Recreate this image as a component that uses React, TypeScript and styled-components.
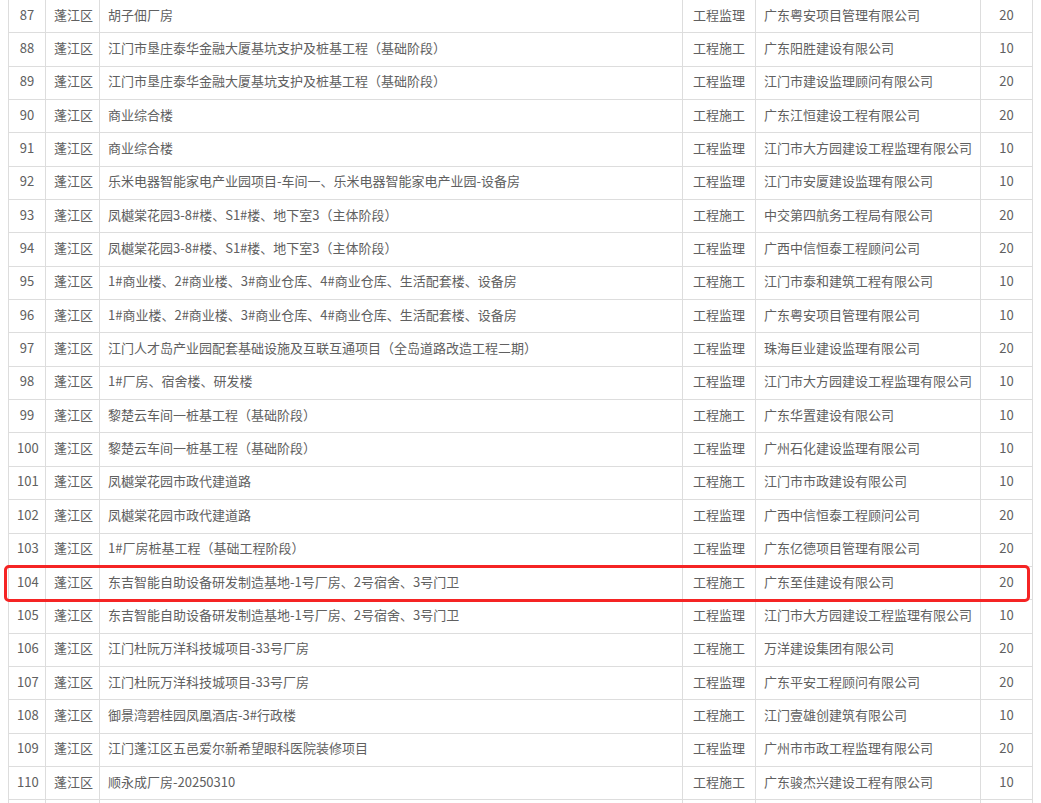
import React from "react";
import styled, { createGlobalStyle } from "styled-components";

const GlobalStyle = createGlobalStyle`
  html, body {
    margin: 0;
    padding: 0;
    background: #ffffff;
    overflow: hidden;
  }
  body {
    font-family: "Noto Sans CJK SC", "Noto Sans", sans-serif;
  }
`;

const Page = styled.div`
  position: relative;
  padding-left: 8px;
  height: 803px;
  overflow: hidden;
`;

const Table = styled.table`
  border-collapse: collapse;
  table-layout: fixed;
  width: 1024px;
  margin-top: -1px;
  font-size: 13px;
  color: #606060;
`;

const Row = styled.tr`
  height: 33.35px;
`;

const Cell = styled.td<{ $align?: "left" | "center" }>`
  border: 1px solid #dddddd;
  padding: 0 8px 3px;
  text-align: ${(p) => p.$align ?? "center"};
  white-space: nowrap;
  overflow: hidden;
  line-height: 18px;
  vertical-align: middle;
`;

const Highlight = styled.div`
  position: absolute;
  left: 4px;
  top: 565px;
  width: 1026px;
  height: 37px;
  box-sizing: border-box;
  border: 3px solid #f52424;
  border-radius: 5px;
  pointer-events: none;
`;

type Item = [number, string, string, string, number];

const A = "江门市垦庄泰华金融大厦基坑支护及桩基工程（基础阶段）";
const B = "凤樾棠花园3-8#楼、S1#楼、地下室3（主体阶段）";
const C = "1#商业楼、2#商业楼、3#商业仓库、4#商业仓库、生活配套楼、设备房";
const D = "黎楚云车间一桩基工程（基础阶段）";
const E = "凤樾棠花园市政代建道路";
const F = "东吉智能自助设备研发制造基地-1号厂房、2号宿舍、3号门卫";
const G = "江门杜阮万洋科技城项目-33号厂房";

const rows: Item[] = [
  [87, "胡子佃厂房", "工程监理", "广东粤安项目管理有限公司", 20],
  [88, A, "工程施工", "广东阳胜建设有限公司", 10],
  [89, A, "工程监理", "江门市建设监理顾问有限公司", 20],
  [90, "商业综合楼", "工程施工", "广东江恒建设工程有限公司", 20],
  [91, "商业综合楼", "工程监理", "江门市大方园建设工程监理有限公司", 10],
  [92, "乐米电器智能家电产业园项目-车间一、乐米电器智能家电产业园-设备房", "工程监理", "江门市安厦建设监理有限公司", 10],
  [93, B, "工程施工", "中交第四航务工程局有限公司", 20],
  [94, B, "工程监理", "广西中信恒泰工程顾问公司", 20],
  [95, C, "工程施工", "江门市泰和建筑工程有限公司", 10],
  [96, C, "工程监理", "广东粤安项目管理有限公司", 10],
  [97, "江门人才岛产业园配套基础设施及互联互通项目（全岛道路改造工程二期）", "工程监理", "珠海巨业建设监理有限公司", 20],
  [98, "1#厂房、宿舍楼、研发楼", "工程监理", "江门市大方园建设工程监理有限公司", 10],
  [99, D, "工程施工", "广东华置建设有限公司", 10],
  [100, D, "工程监理", "广州石化建设监理有限公司", 10],
  [101, E, "工程施工", "江门市市政建设有限公司", 10],
  [102, E, "工程监理", "广西中信恒泰工程顾问公司", 20],
  [103, "1#厂房桩基工程（基础工程阶段）", "工程监理", "广东亿德项目管理有限公司", 20],
  [104, F, "工程施工", "广东至佳建设有限公司", 20],
  [105, F, "工程监理", "江门市大方园建设工程监理有限公司", 10],
  [106, G, "工程施工", "万洋建设集团有限公司", 20],
  [107, G, "工程监理", "广东平安工程顾问有限公司", 20],
  [108, "御景湾碧桂园凤凰酒店-3#行政楼", "工程施工", "江门壹雄创建筑有限公司", 10],
  [109, "江门蓬江区五邑爱尔新希望眼科医院装修项目", "工程监理", "广州市市政工程监理有限公司", 20],
  [110, "顺永成厂房-20250310", "工程施工", "广东骏杰兴建设工程有限公司", 10],
];

export default function App() {
  return (
    <>
      <GlobalStyle />
      <Page>
        <Table>
          <colgroup>
            <col style={{ width: 37 }} />
            <col style={{ width: 54 }} />
            <col style={{ width: 583 }} />
            <col style={{ width: 73 }} />
            <col style={{ width: 225 }} />
            <col style={{ width: 52 }} />
          </colgroup>
          <tbody>
            {rows.map(([n, name, type, company, score]) => (
              <Row key={n}>
                <Cell>{n}</Cell>
                <Cell>蓬江区</Cell>
                <Cell $align="left">{name}</Cell>
                <Cell>{type}</Cell>
                <Cell $align="left">{company}</Cell>
                <Cell>{score}</Cell>
              </Row>
            ))}
            <Row>
              <Cell />
              <Cell />
              <Cell $align="left" />
              <Cell />
              <Cell $align="left" />
              <Cell />
            </Row>
          </tbody>
        </Table>
        <Highlight />
      </Page>
    </>
  );
}
